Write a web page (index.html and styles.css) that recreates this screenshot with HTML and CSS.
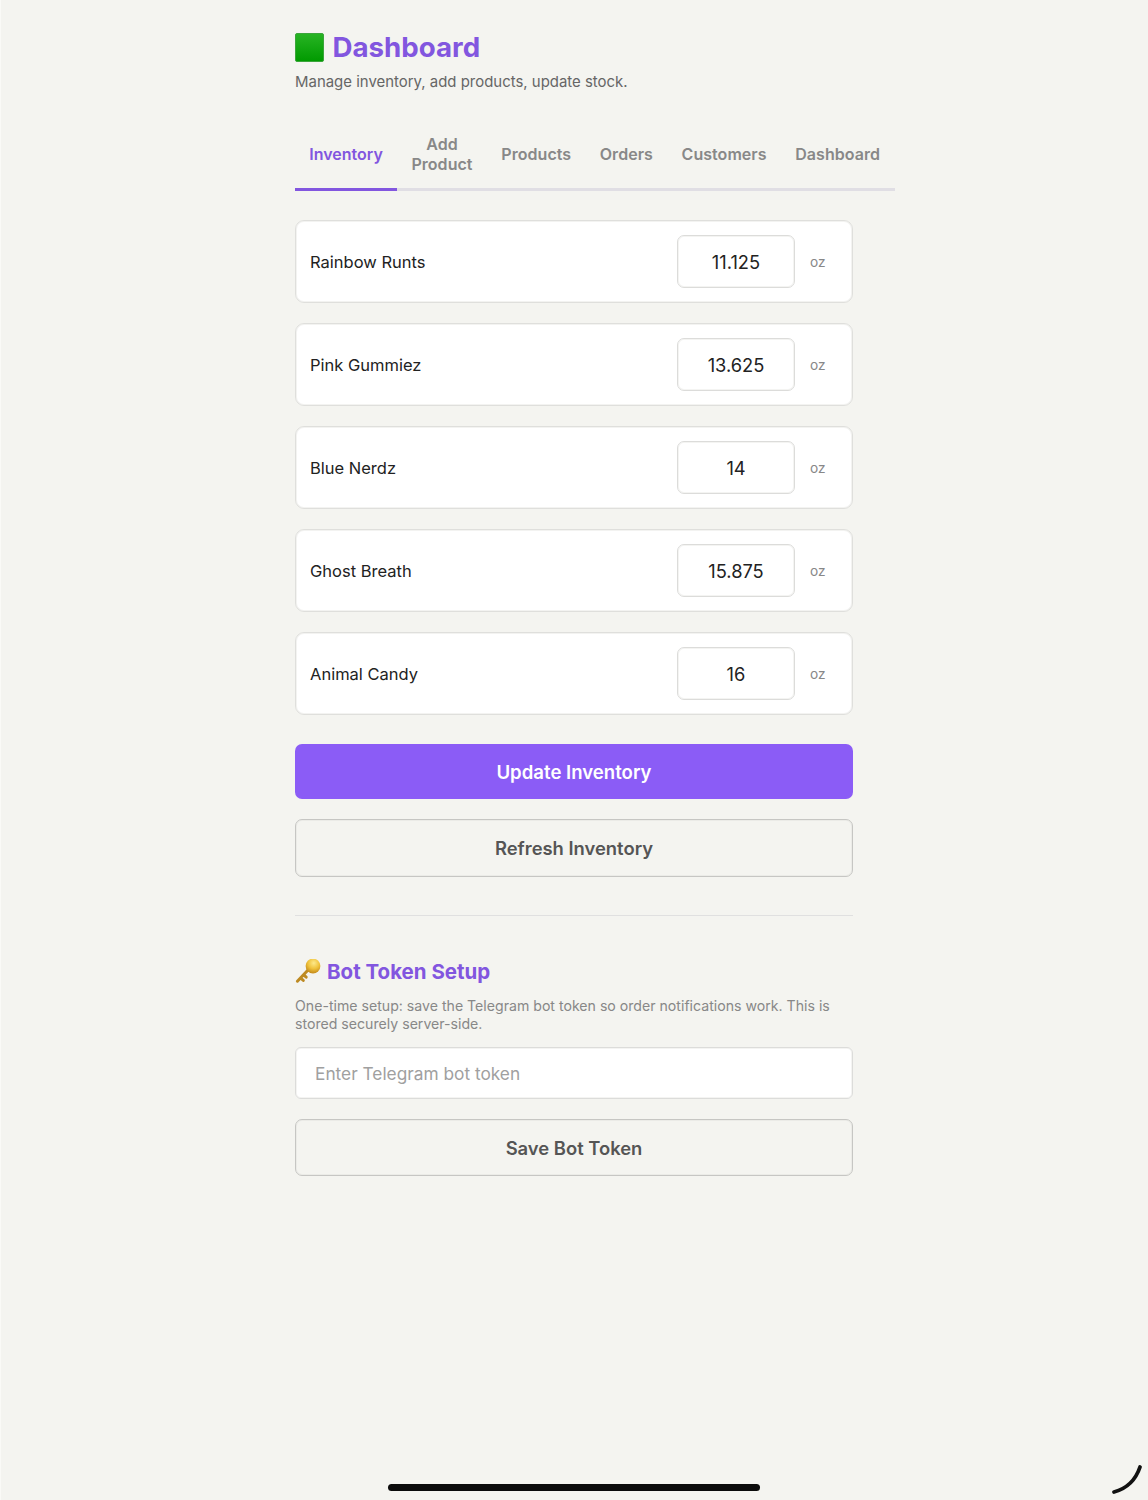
FILE: index.html
```html
<!DOCTYPE html>
<html lang="en">
<head>
<meta charset="utf-8">
<title>Dashboard</title>
<link rel="stylesheet" href="styles.css">
</head>
<body>
<main class="page">
  <h1 class="title">
    <svg class="title-icon" viewBox="0 0 29 29" aria-hidden="true">
      <defs><linearGradient id="sq" x1="0" y1="0" x2="0" y2="1"><stop offset="0" stop-color="#28b424"/><stop offset="1" stop-color="#009a00"/></linearGradient></defs>
      <rect x="0.5" y="0.5" width="28" height="28" rx="1.5" fill="url(#sq)" stroke="#3aa53a"/>
    </svg>
    <span class="title-text">Dashboard</span>
  </h1>
  <p class="subtitle">Manage inventory, add products, update stock.</p>

  <nav class="tabs">
    <a class="tab active">Inventory</a>
    <a class="tab">Add Product</a>
    <a class="tab">Products</a>
    <a class="tab">Orders</a>
    <a class="tab">Customers</a>
    <a class="tab">Dashboard</a>
  </nav>

  <section class="items">
    <div class="item"><span class="name">Rainbow Runts</span><input class="qty" value="11.125"><span class="unit">oz</span></div>
    <div class="item"><span class="name">Pink Gummiez</span><input class="qty" value="13.625"><span class="unit">oz</span></div>
    <div class="item"><span class="name">Blue Nerdz</span><input class="qty" value="14"><span class="unit">oz</span></div>
    <div class="item"><span class="name">Ghost Breath</span><input class="qty" value="15.875"><span class="unit">oz</span></div>
    <div class="item"><span class="name">Animal Candy</span><input class="qty" value="16"><span class="unit">oz</span></div>
  </section>

  <button class="btn primary">Update Inventory</button>
  <button class="btn secondary refresh">Refresh Inventory</button>

  <hr class="divider">

  <h2 class="section-title">
    <svg class="key-icon" viewBox="0 0 26 26" aria-hidden="true">
      <defs><radialGradient id="kg" cx="0.55" cy="0.3" r="0.7"><stop offset="0" stop-color="#fde98a"/><stop offset="0.55" stop-color="#efc23c"/><stop offset="1" stop-color="#c48a1a"/></radialGradient></defs>
      <path d="M13.5 10.5 L2.4 22.2 M5.6 19 L8.3 21.4 M8.6 15.8 L11.2 18.2" fill="none" stroke="#bd8a22" stroke-width="3" stroke-linecap="round"/>
      <circle cx="18" cy="7" r="7.4" fill="url(#kg)"/>
    </svg>
    <span>Bot Token Setup</span>
  </h2>
  <p class="note">One-time setup: save the Telegram bot token so order notifications work. This is stored securely server-side.</p>
  <input class="token" placeholder="Enter Telegram bot token">
  <button class="btn secondary save">Save Bot Token</button>
</main>

<div class="home-bar"></div>
<svg class="pencil-mark" viewBox="0 0 34 34" aria-hidden="true">
  <path d="M3 30 C14 27 24 20 29 5" fill="none" stroke="#111" stroke-width="3.8" stroke-linecap="round"/>
</svg>
</body>
</html>
```

FILE: styles.css
```css
* { box-sizing: border-box; }
html, body { margin: 0; padding: 0; }
body {
  position: relative;
  height: 1500px;
  overflow: hidden;
  background: #f4f4f0;
  font-family: Inter, "Liberation Sans", sans-serif;
  border-left: 1px solid #fafaf7;
}
.page {
  width: 558px;
  margin: 0 0 0 294px;
  padding-top: 30px;
}
.title {
  display: flex;
  align-items: center;
  gap: 8.5px;
  margin: 0;
  height: 35px;
  font-size: 27.7px;
  font-weight: 700;
  line-height: 35px;
  color: #8256df;
}
.title-icon { width: 29px; height: 29px; flex: none; margin-top: -1px; }
.title-text { margin-top: -1px; }
.subtitle {
  margin: 7px 0 0;
  font-size: 14.95px;
  line-height: 20px;
  color: #666;
}
.tabs {
  display: flex;
  width: 600px;
  margin-top: 32px;
  border-bottom: 3px solid #e0dee4;
}
.tab {
  display: flex;
  flex: none;
  align-items: center;
  text-align: center;
  padding: 10px 14.3px 14px;
  margin-bottom: -3px;
  border-bottom: 3px solid transparent;
  font-size: 16px;
  font-weight: 600;
  line-height: 20px;
  letter-spacing: 0.05px;
  color: #888;
}
.tab:nth-child(2) { width: 90px; justify-content: center; padding-left: 10px; padding-right: 10px; }
.tab.active { width: 102px; letter-spacing: 0; color: #8256df; border-bottom-color: #8256df; }
.items {
  display: flex;
  flex-direction: column;
  gap: 20px;
  margin-top: 29px;
}
.item {
  display: flex;
  align-items: center;
  height: 83px;
  padding: 0 14px;
  background: #fff;
  border: 1px solid #dfdfdc;
  box-shadow: inset 0 0 0 1px #f3f3f1;
  border-radius: 9px;
}
.name {
  flex: 1;
  font-size: 16.5px;
  color: #222;
}
.qty {
  width: 118px;
  height: 53px;
  padding: 0;
  text-align: center;
  border: 1px solid #dcdcda;
  box-shadow: inset 0 0 0 1px #f4f4f2;
  border-radius: 7px;
  background: #fff;
  font: 400 18.3px Inter, "Liberation Sans", sans-serif;
  color: #222;
}
.unit {
  width: 43px;
  padding-left: 15px;
  font-size: 13.7px;
  color: #888;
}
.btn {
  display: block;
  width: 100%;
  font-family: Inter, "Liberation Sans", sans-serif;
  font-size: 18.4px;
  font-weight: 600;
  border-radius: 7px;
  cursor: pointer;
}
.primary {
  height: 55px;
  margin-top: 29px;
  border: 0;
  background: #8b5cf6;
  color: #fff;
  font-size: 18.6px;
}
.secondary {
  height: 58px;
  background: transparent;
  border: 1px solid #c6c6c3;
  box-shadow: inset 0 0 0 1px #ebebe7;
  color: #555;
}
.refresh { margin-top: 20px; }
.divider {
  margin: 38px 0 0;
  border: 0;
  border-top: 1px solid #e0e0e0;
}
.section-title {
  display: flex;
  align-items: center;
  gap: 6px;
  margin: 43px 0 0;
  height: 26px;
  font-size: 20.5px;
  font-weight: 700;
  line-height: 26px;
  color: #8256df;
}
.key-icon { width: 26px; height: 26px; flex: none; }
.note {
  margin: 12px 0 0;
  font-size: 14.13px;
  line-height: 18px;
  color: #888;
}
.token {
  display: block;
  width: 100%;
  height: 52px;
  margin-top: 14px;
  padding: 0 19px;
  background: #fff;
  border: 1px solid #dcdcda;
  box-shadow: inset 0 0 0 1px #f4f4f2;
  border-radius: 6px;
  font: 400 17.3px Inter, "Liberation Sans", sans-serif;
}
.token::placeholder { color: #a0a0a0; opacity: 1; }
.save { margin-top: 20px; height: 57px; }
.home-bar {
  position: absolute;
  left: 387px;
  top: 1484px;
  width: 372px;
  height: 7px;
  border-radius: 4px;
  background: #0b0b0b;
}
.pencil-mark {
  position: absolute;
  left: 1110px;
  top: 1462px;
  width: 34px;
  height: 34px;
}
```
